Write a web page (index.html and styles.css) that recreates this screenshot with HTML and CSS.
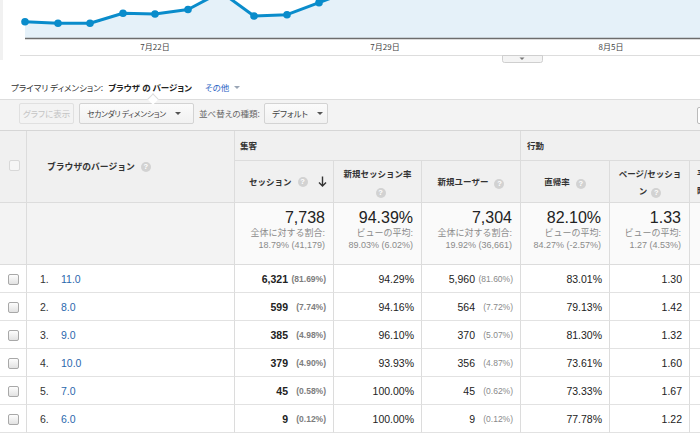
FILE: index.html
```html
<!DOCTYPE html>
<html lang="ja">
<head>
<meta charset="utf-8">
<title>ブラウザのバージョン</title>
<link rel="stylesheet" href="styles.css">
</head>
<body>
<div class="chart">
  <svg class="chart-svg" width="700" height="64" viewBox="0 0 700 64">
    <rect x="0" y="0" width="3" height="60" fill="#f1f1f1"/>
    <path class="area" d="M25,21.7 L58,23.3 L90,23.3 L123,13.3 L155,14 L188,9.5 L221,-8 L254,16 L287,14.7 L319,2.7 L352,-10 L385,-20 L700,-20 L700,38 L25,38 Z"/>
    <line class="axis" x1="25" y1="38.5" x2="700" y2="38.5"/>
    <path class="line" d="M25,21.7 L58,23.3 L90,23.3 L123,13.3 L155,14 L188,9.5 L221,-8 L254,16 L287,14.7 L319,2.7 L352,-10 L385,-20 L700,-20"/>
    <g class="dots">
      <circle cx="25" cy="21.7" r="3.8"/>
      <circle cx="58" cy="23.3" r="3.8"/>
      <circle cx="90" cy="23.3" r="3.8"/>
      <circle cx="123" cy="13.3" r="3.8"/>
      <circle cx="155" cy="14" r="3.8"/>
      <circle cx="188" cy="9.5" r="3.8"/>
      <circle cx="254" cy="16" r="3.8"/>
      <circle cx="287" cy="14.7" r="3.8"/>
      <circle cx="319" cy="2.7" r="3.8"/>
    </g>
    <text class="lbl" x="155" y="49.5">7月22日</text>
    <text class="lbl" x="385" y="49.5">7月29日</text>
    <text class="lbl" x="611" y="49.5">8月5日</text>
    <line class="rule" x1="20" y1="55.5" x2="700" y2="55.5"/>
    <path class="tab" d="M502.5,55.5 h40 v5 a2,2 0 0 1 -2,2 h-36 a2,2 0 0 1 -2,-2 z"/>
    <path d="M519.5,57.5 h5 l-2.5,2.5 z" fill="#777"/>
  </svg>
</div>

<div class="dims">
  <span class="dims-label">プライマリ ディメンション:</span>
  <span class="dims-value">ブラウザ の バージョン</span>
  <span class="dims-other">その他</span><span class="caret caret-light"></span>
</div>

<div class="toolbar">
  <span class="btn btn-disabled">グラフに表示</span>
  <span class="btn btn-select btn-secondary"><span class="tight">セカンダリ ディメンション</span><span class="caret"></span></span>
  <span class="tb-label">並べ替えの種類:</span>
  <span class="btn btn-select btn-sort">デフォルト<span class="caret"></span></span>
  <span class="btn btn-edge"></span>
</div>

<div class="grid">
  <div class="h h-check"><span class="cb cb-head"></span></div>
  <div class="h h-dim">ブラウザのバージョン<span class="q">?</span></div>
  <div class="h h-group g-acq">集客</div>
  <div class="h h-group g-beh">行動</div>

  <div class="h h-sub h-sessions"><span>セッション</span><span class="q">?</span><svg class="sort" width="9" height="11" viewBox="0 0 9 11"><path d="M4.5,0.5 V10 M1,6.5 L4.5,10 L8,6.5" fill="none" stroke="#333" stroke-width="1.4"/></svg></div>
  <div class="h h-sub"><span class="ht">新規セッション率 <span class="q">?</span></span></div>
  <div class="h h-sub"><span class="ht">新規ユーザー<span class="q">?</span></span></div>
  <div class="h h-sub"><span class="ht">直帰率<span class="q">?</span></span></div>
  <div class="h h-sub h-pages"><span class="ht">ページ/セッション<span class="q">?</span></span></div>
  <div class="h h-sub h-last"><span class="ht">平均セッション時間</span></div>

  <div class="t t-blank"></div>
  <div class="t t-blank"></div>
  <div class="t"><div class="big">7,738</div><div class="sub">全体に対する割合:</div><div class="sub">18.79% (41,179)</div></div>
  <div class="t"><div class="big">94.39%</div><div class="sub">ビューの平均:</div><div class="sub">89.03% (6.02%)</div></div>
  <div class="t"><div class="big">7,304</div><div class="sub">全体に対する割合:</div><div class="sub">19.92% (36,661)</div></div>
  <div class="t"><div class="big">82.10%</div><div class="sub">ビューの平均:</div><div class="sub">84.27% (-2.57%)</div></div>
  <div class="t"><div class="big">1.33</div><div class="sub">ビューの平均:</div><div class="sub">1.27 (4.53%)</div></div>
  <div class="t"></div>

  <div class="d d-check"><span class="cb"></span></div>
  <div class="d d-dim"><span class="idx">1.</span><a class="link">11.0</a></div>
  <div class="d num bold">6,321<span class="pct">(81.69%)</span></div>
  <div class="d num">94.29%</div>
  <div class="d num">5,960<span class="pct">(81.60%)</span></div>
  <div class="d num">83.01%</div>
  <div class="d num">1.30</div>
  <div class="d num"></div>

  <div class="d d-check"><span class="cb"></span></div>
  <div class="d d-dim"><span class="idx">2.</span><a class="link">8.0</a></div>
  <div class="d num bold">599<span class="pct">(7.74%)</span></div>
  <div class="d num">94.16%</div>
  <div class="d num">564<span class="pct">(7.72%)</span></div>
  <div class="d num">79.13%</div>
  <div class="d num">1.42</div>
  <div class="d num"></div>

  <div class="d d-check"><span class="cb"></span></div>
  <div class="d d-dim"><span class="idx">3.</span><a class="link">9.0</a></div>
  <div class="d num bold">385<span class="pct">(4.98%)</span></div>
  <div class="d num">96.10%</div>
  <div class="d num">370<span class="pct">(5.07%)</span></div>
  <div class="d num">81.30%</div>
  <div class="d num">1.32</div>
  <div class="d num"></div>

  <div class="d d-check"><span class="cb"></span></div>
  <div class="d d-dim"><span class="idx">4.</span><a class="link">10.0</a></div>
  <div class="d num bold">379<span class="pct">(4.90%)</span></div>
  <div class="d num">93.93%</div>
  <div class="d num">356<span class="pct">(4.87%)</span></div>
  <div class="d num">73.61%</div>
  <div class="d num">1.60</div>
  <div class="d num"></div>

  <div class="d d-check"><span class="cb"></span></div>
  <div class="d d-dim"><span class="idx">5.</span><a class="link">7.0</a></div>
  <div class="d num bold">45<span class="pct">(0.58%)</span></div>
  <div class="d num">100.00%</div>
  <div class="d num">45<span class="pct">(0.62%)</span></div>
  <div class="d num">73.33%</div>
  <div class="d num">1.67</div>
  <div class="d num"></div>

  <div class="d d-check"><span class="cb"></span></div>
  <div class="d d-dim"><span class="idx">6.</span><a class="link">6.0</a></div>
  <div class="d num bold">9<span class="pct">(0.12%)</span></div>
  <div class="d num">100.00%</div>
  <div class="d num">9<span class="pct">(0.12%)</span></div>
  <div class="d num">77.78%</div>
  <div class="d num">1.22</div>
  <div class="d num"></div>
</div>
</body>
</html>
```

FILE: styles.css
```css
* { box-sizing: border-box; }

html, body {
  margin: 0;
  padding: 0;
  background: #ffffff;
  overflow: hidden;
}

body {
  width: 700px;
  height: 433px;
  font-family: "Liberation Sans", Arial, "Noto Sans CJK JP", sans-serif;
  color: #333333;
}

/* ---------- chart ---------- */
.chart { height: 64px; }
.chart-svg { display: block; }
.area { fill: #e5f1f9; }
.axis { stroke: #6d6d6d; stroke-width: 1.5; }
.line { fill: none; stroke: #0a8ccb; stroke-width: 3; stroke-linejoin: round; }
.dots circle { fill: #0a8ccb; }
.lbl {
  font-family: "Noto Sans CJK JP", sans-serif;
  font-size: 8px;
  fill: #444444;
  text-anchor: middle;
}
.rule { stroke: #dddddd; stroke-width: 1; }
.tab { fill: #f4f4f4; stroke: #cfcfcf; stroke-width: 1; }

/* ---------- primary dimension line ---------- */
.dims {
  height: 35px;
  padding: 12px 0 0 11px;
  display: flex;
  align-items: center;
  font-family: "Noto Sans CJK JP", sans-serif;
  font-size: 8.5px;
  font-feature-settings: "palt";
  line-height: 23px;
}
.dims-label { color: #333333; }
.dims-value { color: #222222; font-weight: bold; margin-left: 5px; }
.dims-other { color: #2a65c4; margin-left: 13px; }

.caret {
  display: inline-block;
  width: 0;
  height: 0;
  border-left: 3px solid transparent;
  border-right: 3px solid transparent;
  border-top: 3px solid #555555;
}
.caret-light { border-top-color: #9aa5b5; margin-left: 5px; }

/* ---------- toolbar ---------- */
.toolbar {
  position: relative;
  height: 31px;
  border-top: 1px solid #dddddd;
  background: #f3f3f3;
  display: flex;
  align-items: flex-start;
  padding: 3px 0 0 19px;
  font-family: "Noto Sans CJK JP", sans-serif;
  font-size: 8.5px;
  font-feature-settings: "palt";
}
.toolbar::before {
  content: "";
  position: absolute;
  left: 149px;
  top: -5px;
  width: 7px;
  height: 7px;
  background: #ffffff;
  border-left: 1px solid #dddddd;
  border-top: 1px solid #dddddd;
  transform: rotate(45deg);
}
.btn {
  height: 21px;
  border: 1px solid #d3d3d3;
  border-radius: 2px;
  display: flex;
  align-items: center;
  line-height: 19px;
  white-space: nowrap;
}
.btn-disabled {
  width: 55px;
  justify-content: center;
  color: #c4c4c4;
  border-color: #e0e0e0;
  background: #f3f3f3;
}
.btn-select {
  margin-left: 5px;
  background: linear-gradient(#fbfbfb, #f1f1f1);
  color: #444444;
  padding-left: 7px;
}
.btn-secondary { width: 115px; }
.tight { font-size: 7.8px; letter-spacing: -0.35px; }
.btn-secondary .caret { margin-left: 9px; }
.btn-sort { width: 64px; margin-left: 4px; }
.btn-sort .caret { margin-left: 9px; }
.tb-label {
  margin-left: 5px;
  color: #666666;
  line-height: 21px;
}
.btn-edge {
  margin-left: auto;
  margin-right: -30px;
  margin-top: 4px;
  height: 17px;
  width: 33px;
  background: #ffffff;
  border-color: #bbbbbb;
}

/* ---------- table ---------- */
.grid {
  display: grid;
  width: 780px;
  grid-template-columns: 27px 208px 99px 88px 99px 89px 80px 90px;
  grid-template-rows: 30px 42px 62px repeat(6, 28px);
  border-top: 1px solid #d6d6d6;
}
.grid > div {
  border-right: 1px solid #dcdcdc;
  border-bottom: 1px solid #dcdcdc;
}

.h {
  background: #f0f0f0;
  font-family: "Noto Sans CJK JP", sans-serif;
  font-weight: bold;
  font-size: 8.5px;
  color: #333333;
  line-height: 17px;
}
.h-check {
  grid-row: span 2;
  display: flex;
  align-items: center;
  justify-content: center;
  padding-bottom: 2px;
  padding-left: 2px;
}
.h-dim {
  grid-row: span 2;
  display: flex;
  align-items: center;
  padding-left: 20px;
  font-size: 8.8px;
}
.h-group {
  display: flex;
  align-items: center;
  padding-left: 5px;
  padding-bottom: 1px;
}
.g-acq { grid-column: span 3; }
.g-beh { grid-column: span 3; padding-left: 6px; }
.h-sub {
  display: flex;
  align-items: center;
  justify-content: center;
  text-align: center;
  padding: 0 5px;
}
.ht { display: block; }
.h-sessions {
  justify-content: flex-start;
  padding-left: 14px;
}
.h-sessions .sort { margin-left: 10px; }
.h-pages { padding: 0 4px 0 5px; }
.h-pages .q { margin-left: 4px; }
.h-last {
  justify-content: flex-start;
  text-align: left;
  padding-left: 7px;
  padding-right: 20px;
}

.q {
  display: inline-block;
  vertical-align: -1px;
  width: 10px;
  height: 10px;
  margin-left: 6px;
  border-radius: 50%;
  background: #d2d2d2;
  color: #ffffff;
  text-align: center;
  font-family: "Liberation Sans", Arial, sans-serif;
  font-size: 7.5px;
  line-height: 10px;
  font-weight: bold;
}

.cb {
  display: block;
  width: 11px;
  height: 11px;
  border: 1px solid #a8a8a8;
  border-radius: 2px;
  background: linear-gradient(#fdfdfd, #e2e2e2);
}
.cb-head {
  border-color: #d8d8d8;
  background: #f6f6f6;
}

/* totals row */
.t {
  background: #fafafa;
  text-align: right;
  padding: 6px 8px 0 0;
  color: #222222;
}
.t-blank { background: #f3f3f3; }
.big {
  font-size: 16px;
  line-height: 18px;
}
.sub {
  font-family: "Liberation Sans", Arial, "Noto Sans CJK JP", sans-serif;
  font-size: 9px;
  line-height: 12px;
  color: #8a8a8a;
}

/* data rows */
.d {
  font-size: 10.5px;
  color: #222222;
  display: flex;
  align-items: center;
  border-bottom-color: #e2e2e2 !important;
}
.d-check { justify-content: center; padding-top: 1px; }
.d-dim { padding-left: 13px; }
.idx { width: 21px; color: #333333; }
.link { color: #2a68ad; text-decoration: none; }
.num {
  justify-content: flex-end;
  padding-right: 7px;
}
.bold { font-weight: bold; }
.pct {
  display: inline-block;
  width: 38px;
  text-align: right;
  font-size: 8.5px;
  color: #8a8a8a;
  font-weight: normal;
}
.bold .pct { font-weight: bold; color: #7d7d7d; }
```
